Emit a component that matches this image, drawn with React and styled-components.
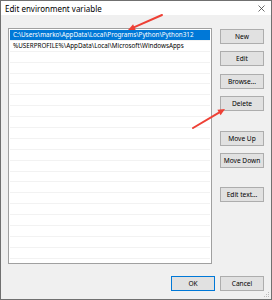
import React from "react";
import styled, { createGlobalStyle } from "styled-components";

const GlobalStyle = createGlobalStyle`
  html, body {
    margin: 0;
    padding: 0;
    background: #ffffff;
  }
  * {
    box-sizing: border-box;
  }
`;

const Window = styled.div`
  position: relative;
  width: 272px;
  height: 300px;
  display: flex;
  flex-direction: column;
  border: 1px solid #707070;
  background: #f0f0f0;
  font-family: "Segoe UI", "Noto Sans", "Open Sans", sans-serif;
  color: #000000;
`;

const TitleBar = styled.div`
  height: 14px;
  display: flex;
  align-items: center;
  justify-content: space-between;
  padding: 0 6px 0 4px;
  background: #ffffff;
  font-size: 8px;
`;

const Body = styled.div`
  flex: 1;
  display: flex;
  flex-direction: column;
  padding: 13px 7px 0 7px;
`;

const Main = styled.div`
  display: flex;
  flex-direction: row;
  gap: 8px;
`;

const List = styled.div`
  width: 204px;
  height: 236px;
  background: #ffffff;
  border: 1px solid #a0a0a0;
  padding: 1px 1px 0 1px;
  overflow: hidden;
`;

const Row = styled.div`
  height: 10.9px;
  display: flex;
  align-items: center;
  padding-left: 3px;
  font-size: 6.3px;
  white-space: nowrap;
  border-bottom: 1px solid #f2f2f2;
  background: ${(p) => (p.$selected ? "#0078d7" : "transparent")};
  color: ${(p) => (p.$selected ? "#ffffff" : "#000000")};
`;

const ButtonColumn = styled.div`
  width: 44px;
  display: flex;
  flex-direction: column;
  padding-top: 1px;
`;

const Button = styled.div`
  width: 44px;
  height: 15px;
  margin-top: ${(p) => p.$space || 0}px;
  display: flex;
  align-items: center;
  justify-content: center;
  background: #e1e1e1;
  border: 1px solid ${(p) => (p.$primary ? "#0078d7" : "#adadad")};
  font-size: 6.6px;
  white-space: nowrap;
`;

const Footer = styled.div`
  display: flex;
  justify-content: flex-end;
  gap: 5px;
  margin-top: 12px;
`;

const Overlay = styled.svg`
  position: absolute;
  left: -1px;
  top: -1px;
  pointer-events: none;
`;

const Grip = styled.svg`
  position: absolute;
  right: 1px;
  bottom: 1px;
`;

function Arrow({ x1, y1, x2, y2 }) {
  const a = Math.atan2(y2 - y1, x2 - x1);
  const len = 7;
  const w = 3.2;
  const bx = x2 - Math.cos(a) * len;
  const by = y2 - Math.sin(a) * len;
  const px = -Math.sin(a) * w;
  const py = Math.cos(a) * w;
  return (
    <g>
      <line x1={x1} y1={y1} x2={bx} y2={by} stroke="#ee4035" strokeWidth="2" strokeLinecap="round" />
      <polygon points={`${x2},${y2} ${bx + px},${by + py} ${bx - px},${by - py}`} fill="#ee4035" />
    </g>
  );
}

export default function App() {
  const rows = [
    "C:\\Users\\marko\\AppData\\Local\\Programs\\Python\\Python312",
    "%USERPROFILE%\\AppData\\Local\\Microsoft\\WindowsApps",
  ];
  const empty = Array.from({ length: 20 });

  return (
    <>
      <GlobalStyle />
      <Window>
        <TitleBar>
          <span>Edit environment variable</span>
          <svg width="7" height="7" viewBox="0 0 7 7">
            <path d="M0.5 0.5 L6.5 6.5 M6.5 0.5 L0.5 6.5" stroke="#444" strokeWidth="0.8" />
          </svg>
        </TitleBar>
        <Body>
          <Main>
            <List>
              <Row $selected>{rows[0]}</Row>
              <Row>{rows[1]}</Row>
              {empty.map((_, i) => (
                <Row key={i} />
              ))}
            </List>
            <ButtonColumn>
              <Button>New</Button>
              <Button $space={7}>Edit</Button>
              <Button $space={8}>Browse...</Button>
              <Button $space={7}>Delete</Button>
              <Button $space={20}>Move Up</Button>
              <Button $space={7}>Move Down</Button>
              <Button $space={19}>Edit text...</Button>
            </ButtonColumn>
          </Main>
          <Footer>
            <Button $primary>OK</Button>
            <Button>Cancel</Button>
          </Footer>
        </Body>
        <Grip width="6" height="6" viewBox="0 0 6 6">
          <rect x="4" y="0" width="1" height="1" fill="#bbb" />
          <rect x="2" y="2" width="1" height="1" fill="#bbb" />
          <rect x="4" y="2" width="1" height="1" fill="#bbb" />
          <rect x="0" y="4" width="1" height="1" fill="#bbb" />
          <rect x="2" y="4" width="1" height="1" fill="#bbb" />
          <rect x="4" y="4" width="1" height="1" fill="#bbb" />
        </Grip>
        <Overlay width="272" height="300" viewBox="0 0 272 300">
          <Arrow x1={162} y1={15} x2={128} y2={30} />
          <Arrow x1={193} y1={128} x2={225} y2={109} />
        </Overlay>
      </Window>
    </>
  );
}
